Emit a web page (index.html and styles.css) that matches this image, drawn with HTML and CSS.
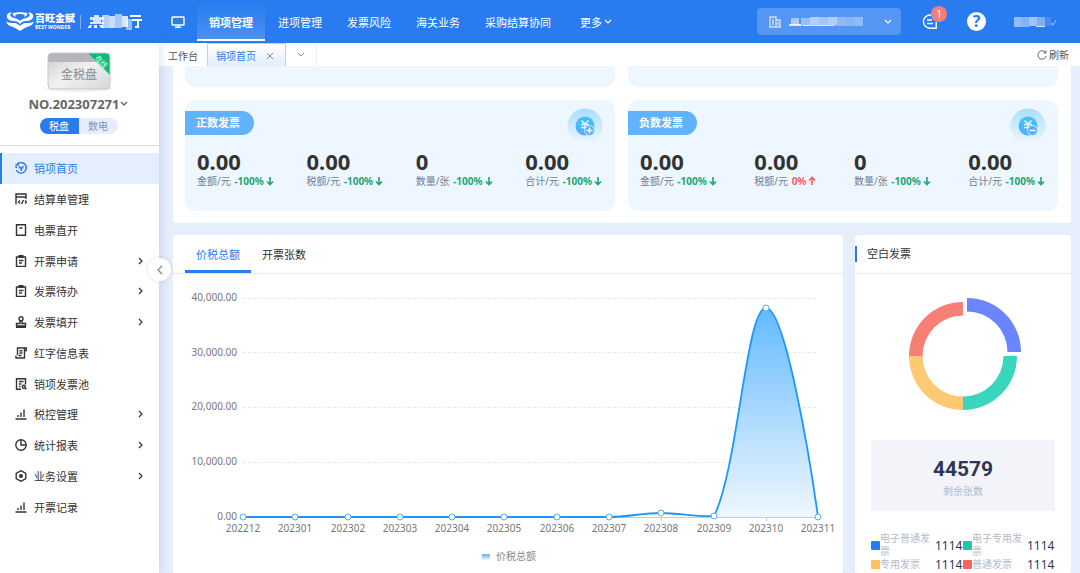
FILE: index.html
```html
<!DOCTYPE html>
<html lang="zh-CN">
<head>
  <meta charset="UTF-8">
  <meta name="viewport" content="width=device-width, initial-scale=1">
  <title>百旺金赋 - 销项管理</title>
  <link rel="stylesheet" href="styles.css">
</head>
<body>
  <!-- Header -->
  <header class="header">
    <a class="brand" href="#">
      <svg class="brand-logo" width="28" height="20" viewBox="0 0 28 20" fill="#fff">
        <path d="M1 3 C2 1 4 0 6 1 C3 2 4 5 8 6 C11 6.500 13 7.500 14 9 C15 7.500 17 6.500 20 6 C24 5 25 2 22 1 C24 0 26 1 27 3 C28 7 24 9 20 9 C17 9 15 10.500 14 12 C13 10.500 11 9 8 9 C4 9 0 7 1 3 Z"/>
        <path d="M7 1 C11 0 17 0 21 1 C22 2 21 4 18 5 C20 3 18 2 14 2 C10 2 8 3 10 5 C7 4 6 2 7 1 Z"/>
        <path d="M0 9 C2 11 5 11 8 11 C11 11 13 13 14 14 C15 13 17 11 20 11 C23 11 26 11 28 9 C27 13 24 14 21 15 C18 16 16 18 14 19 C12 18 10 16 7 15 C4 14 1 13 0 9 Z"/>
      </svg>
      <span class="brand-text">
        <span class="brand-name">百旺金赋</span>
        <span class="brand-en">BEST WONDER</span>
      </span>
      <span class="brand-line"></span>
      <svg class="brand-mask" width="54" height="18" viewBox="0 0 54 18" fill="#fff">
        <path d="M2 4h4v-2h5v2h5v3h-3v2h3v2h-14v-2h3v-2h-3z" opacity=".8"/>
        <path d="M0 14l2-2h2l-1 3h-3zM6 12h3v3h-3zM11 12l4 0 1 3h-3z"/>
        <rect x="14" y="2" width="7" height="13" opacity=".65"/>
        <rect x="21" y="3" width="6" height="12" opacity=".75"/>
        <rect x="27" y="1" width="7" height="14" opacity=".6"/>
        <rect x="34" y="3" width="6" height="11" opacity=".8"/>
        <rect x="38" y="6" width="6" height="11" opacity=".5"/>
        <rect x="42" y="2" width="11" height="2"/>
        <rect x="44" y="6" width="10" height="2"/>
        <path d="M49 8h2v7h-4v-2h2z"/>
      </svg>
    </a>

    <nav class="nav">
      <a class="nav-screen" href="#" aria-label="工作台">
        <svg width="14" height="12" viewBox="0 0 14 12" fill="none" stroke="#fff" stroke-width="1.400">
          <rect x="1" y="1" width="12" height="8" rx=".6"/>
          <path d="M7 9v2M4 11.300h6"/>
        </svg>
      </a>
      <a class="nav-item active" href="#">销项管理</a>
      <a class="nav-item" href="#">进项管理</a>
      <a class="nav-item" href="#">发票风险</a>
      <a class="nav-item" href="#">海关业务</a>
      <a class="nav-item" href="#">采购结算协同</a>
      <a class="nav-item more" href="#">更多
        <svg width="8" height="6" viewBox="0 0 8 6" fill="none" stroke="#fff" stroke-width="1.200"><path d="M1 1l3 3 3-3"/></svg>
      </a>
    </nav>

    <div class="header-right">
      <button class="company" type="button" aria-label="企业">
        <svg width="12" height="12" viewBox="0 0 12 12" fill="none" stroke="#cfe0fd" stroke-width="1.400">
          <path d="M1 11V1h6v10M7 4h4v7M0 11h12M3 4h2M3 6h2M3 8h2M9 6v3"/>
        </svg>
        <svg width="74" height="12" viewBox="0 0 74 12" fill="#fff">
          <rect x="2" y="2" width="8" height="7" opacity=".5"/>
          <rect x="0" y="8" width="12" height="2" opacity=".8"/>
          <rect x="12" y="2" width="9" height="8" opacity=".4"/>
          <rect x="21" y="1" width="9" height="8" opacity=".55"/>
          <rect x="14" y="9" width="32" height="1" opacity=".7"/>
          <rect x="30" y="1" width="9" height="9" opacity=".45"/>
          <rect x="39" y="1" width="9" height="8" opacity=".55"/>
          <rect x="48" y="1" width="9" height="9" opacity=".35"/>
          <rect x="57" y="1" width="9" height="9" opacity=".3"/>
          <rect x="66" y="1" width="8" height="9" opacity=".36"/>
        </svg>
        <svg class="company-arrow" width="8" height="6" viewBox="0 0 8 6" fill="none" stroke="#fff" stroke-width="1.200"><path d="M1 1l3 3 3-3"/></svg>
      </button>
      <button class="message" type="button" aria-label="消息">
        <svg width="16" height="16" viewBox="0 0 16 16" fill="none" stroke="#fff" stroke-width="1.400">
          <path d="M9 1H8a6.500 6.500 0 1 0 0 13.200h6.200V8"/>
          <path d="M5 6h5M5 9.500h6"/>
        </svg>
        <span class="badge">1</span>
      </button>
      <a class="help" href="#" aria-label="帮助">?</a>
      <button class="user" type="button" aria-label="用户">
        <svg width="44" height="14" viewBox="0 0 44 14" fill="#fff">
          <rect x="0" y="2" width="7" height="10" opacity=".5"/>
          <rect x="7" y="2" width="8" height="10" opacity=".42"/>
          <rect x="15" y="2" width="8" height="9" opacity=".55"/>
          <rect x="23" y="2" width="8" height="10" opacity=".4"/>
          <rect x="22" y="11" width="9" height="1" opacity=".7"/>
          <rect x="31" y="2" width="6" height="9" opacity=".12"/>
          <path d="M37 8l2 2 3-5" fill="none" stroke="#fff" stroke-width="1.200" opacity=".45"/>
        </svg>
      </button>
    </div>
  </header>

  <div class="layout">
    <!-- Sidebar -->
    <aside class="sidebar">
      <div class="device">
        <svg class="disk" width="70" height="44" viewBox="0 0 70 44">
          <defs>
            <linearGradient id="diskBody" x1="0" y1="0" x2="1" y2="1">
              <stop offset="0" stop-color="#ccccd0"/>
              <stop offset=".5" stop-color="#f2f1f2"/>
              <stop offset="1" stop-color="#d6d5d8"/>
            </linearGradient>
            <clipPath id="diskClip"><rect x="4" y="2" width="62" height="36" rx="4"/></clipPath>
          </defs>
          <ellipse cx="35" cy="38" rx="33" ry="3" fill="#f0f0f1"/>
          <g clip-path="url(#diskClip)">
            <rect x="4" y="2" width="62" height="36" fill="url(#diskBody)"/>
            <rect x="4" y="2" width="62" height="9" fill="#b5b5bb"/>
            <path d="M44 2h22v22z" fill="#0dbb77"/>
          </g>
          <rect x="4" y="2" width="62" height="36" rx="4" fill="none" stroke="#c9c9cc"/>
          <text class="disk-text" x="35" y="28" text-anchor="middle">金税盘</text>
          <text class="disk-flag" x="57" y="13" text-anchor="middle" transform="rotate(45 57 11)">在线</text>
        </svg>
        <button class="device-no" type="button">NO.202307271
          <svg width="8" height="6" viewBox="0 0 8 6" fill="none" stroke="#666" stroke-width="1.400"><path d="M1 1l3 3 3-3"/></svg>
        </button>
        <div class="switch">
          <button class="switch-item on" type="button">税盘</button>
          <button class="switch-item" type="button">数电</button>
        </div>
      </div>

      <nav class="menu">
        <a class="menu-item active" href="#">
          <svg class="icon" viewBox="0 0 12 12"><path d="M2 2.300A5.300 5.300 0 1 1 1.200 8M.3 3h3.500M.3 5.200h2"/><path d="M4.300 3.500L6.200 5.600 8.100 3.500 8.800 4.200 8 5.500h.8v1H7v2.400H5.500V6.500H3.800v-1h.8L3.600 4.200z" fill="currentColor" stroke="none"/></svg>
          销项首页
        </a>
        <a class="menu-item" href="#">
          <svg class="icon" viewBox="0 0 12 12"><path d="M1 11.500V1h10v5M1 4h10M5 7.500L3.500 9 5 10.500M10 7.500L11.500 9 10 10.500M8.500 7L6.500 11"/></svg>
          结算单管理
        </a>
        <a class="menu-item" href="#">
          <svg class="icon" viewBox="0 0 12 12"><path d="M1.500 .8h9v10.400h-9zM4.500 4h3"/></svg>
          电票直开
        </a>
        <a class="menu-item" href="#">
          <svg class="icon" viewBox="0 0 12 12"><path d="M1.500 2h9v9.400h-9zM4 5.500h4.500M4 8h3"/><path d="M3.500 0h5v3h-5z" fill="currentColor" stroke="none"/></svg>
          开票申请
          <svg class="arrow" viewBox="0 0 6 8"><path d="M1 1l3 3-3 3"/></svg>
        </a>
        <a class="menu-item" href="#">
          <svg class="icon" viewBox="0 0 12 12"><path d="M1.500 2h9v9.400h-9zM4 5.500h4.500M4 8h3"/><path d="M3.500 0h5v3h-5z" fill="currentColor" stroke="none"/></svg>
          发票待办
          <svg class="arrow" viewBox="0 0 6 8"><path d="M1 1l3 3-3 3"/></svg>
        </a>
        <a class="menu-item" href="#">
          <svg class="icon" viewBox="0 0 12 12"><circle cx="6" cy="2.800" r="2"/><path d="M5 4.500v3H1.500V10h9V7.500H7v-3M1 11.400h10"/></svg>
          发票填开
          <svg class="arrow" viewBox="0 0 6 8"><path d="M1 1l3 3-3 3"/></svg>
        </a>
        <a class="menu-item" href="#">
          <svg class="icon" viewBox="0 0 12 12"><path d="M2.500 8V1h9v2.500h-2V11h-8.500V8.500M9.500 3.500V1M4.500 3.800h3M4.500 6h3M3.500 8.500h3"/></svg>
          红字信息表
        </a>
        <a class="menu-item" href="#">
          <svg class="icon" viewBox="0 0 12 12"><path d="M6 11.200H1.500V.8h9v5.700M4 3.500h4.500M4 6h2.500M4 8.500h1.500"/><circle cx="8.800" cy="8.800" r="1.500"/><path d="M10 10l1.300 1.300"/></svg>
          销项发票池
        </a>
        <a class="menu-item" href="#">
          <svg class="icon" viewBox="0 0 12 12"><path d="M.5 11h11M3 9V7M6 9V4.500M9 9V1.500"/></svg>
          税控管理
          <svg class="arrow" viewBox="0 0 6 8"><path d="M1 1l3 3-3 3"/></svg>
        </a>
        <a class="menu-item" href="#">
          <svg class="icon" viewBox="0 0 12 12"><circle cx="6" cy="6" r="5.200"/><path d="M6 .8V6h5.200"/></svg>
          统计报表
          <svg class="arrow" viewBox="0 0 6 8"><path d="M1 1l3 3-3 3"/></svg>
        </a>
        <a class="menu-item" href="#">
          <svg class="icon" viewBox="0 0 12 12"><path d="M6 .7l4.800 2.600v5.400L6 11.300 1.200 8.700V3.300z"/><circle cx="6" cy="6" r="1.300" fill="currentColor"/></svg>
          业务设置
          <svg class="arrow" viewBox="0 0 6 8"><path d="M1 1l3 3-3 3"/></svg>
        </a>
        <a class="menu-item" href="#">
          <svg class="icon" viewBox="0 0 12 12"><path d="M.5 11h11M3 9V7M6 9V4.500M9 9V1.500"/></svg>
          开票记录
        </a>
      </nav>
      <button class="collapse" type="button" aria-label="收起菜单">
        <svg width="6" height="10" viewBox="0 0 6 10" fill="none" stroke="#888" stroke-width="1.300"><path d="M5 1L1 5l4 4"/></svg>
      </button>
    </aside>

    <main class="main">
      <!-- Page tabs -->
      <div class="tabs">
        <a class="tab" href="#">工作台</a>
        <a class="tab current" href="#">销项首页
          <svg width="8" height="8" viewBox="0 0 8 8" fill="none" stroke="#888"><path d="M1 1l6 6M7 1L1 7"/></svg>
        </a>
        <button class="tab-more" type="button" aria-label="更多标签">
          <svg width="8" height="6" viewBox="0 0 8 6" fill="none" stroke="#888"><path d="M1 1l3 3 3-3"/></svg>
        </button>
        <button class="refresh" type="button">
          <svg width="10" height="10" viewBox="0 0 10 10" fill="none" stroke="#666"><path d="M8.500 2.500A4.200 4.200 0 1 0 9.200 6M9 .5v2.500H6.500"/></svg>
          刷新
        </button>
      </div>

      <div class="content">
        <!-- Invoice totals -->
        <section class="panel totals">
          <div class="card card-cut"></div>
          <div class="card card-cut"></div>

          <div class="card">
            <h2 class="tag">正数发票</h2>
            <svg class="coin" viewBox="0 0 36 36">
              <defs>
                <linearGradient id="halo" x1="0" y1="0" x2="0" y2="1">
                  <stop offset="0" stop-color="#a9deff"/>
                  <stop offset="1" stop-color="#eef7ff"/>
                </linearGradient>
                <linearGradient id="coin" x1="0" y1="0" x2="0" y2="1">
                  <stop offset="0" stop-color="#3cc3fb"/>
                  <stop offset="1" stop-color="#5aacff"/>
                </linearGradient>
              </defs>
              <circle cx="18" cy="18" r="17.500" fill="url(#halo)"/>
              <circle cx="18" cy="18" r="9.500" fill="url(#coin)"/>
              <path d="M14.500 12.500l3.500 3.500 3.500-3.500M14 16.500h8M14 19.500h5M18 16v6" fill="none" stroke="#e4f6ff" stroke-width="1.500"/>
              <circle cx="22.500" cy="22.500" r="5" fill="#55aeff" stroke="#d8efff"/>
              <path d="M19.500 22.500h6M22.500 19.500v6" stroke="#fff" stroke-width="1.500"/>
            </svg>
            <div class="figures">
              <div class="figure"><strong>0.00</strong><p>金额/元 <b class="down">-100%<svg class="trend" viewBox="0 0 8 10"><path d="M4 1v7M1 5.500l3 3 3-3"/></svg></b></p></div>
              <div class="figure"><strong>0.00</strong><p>税额/元 <b class="down">-100%<svg class="trend" viewBox="0 0 8 10"><path d="M4 1v7M1 5.500l3 3 3-3"/></svg></b></p></div>
              <div class="figure"><strong>0</strong><p>数量/张 <b class="down">-100%<svg class="trend" viewBox="0 0 8 10"><path d="M4 1v7M1 5.500l3 3 3-3"/></svg></b></p></div>
              <div class="figure"><strong>0.00</strong><p>合计/元 <b class="down">-100%<svg class="trend" viewBox="0 0 8 10"><path d="M4 1v7M1 5.500l3 3 3-3"/></svg></b></p></div>
            </div>
          </div>

          <div class="card">
            <h2 class="tag">负数发票</h2>
            <svg class="coin" viewBox="0 0 36 36">
              <circle cx="18" cy="18" r="17.500" fill="url(#halo)"/>
              <circle cx="18" cy="18" r="9.500" fill="url(#coin)"/>
              <path d="M14.500 12.500l3.500 3.500 3.500-3.500M14 16.500h8M14 19.500h5M18 16v6" fill="none" stroke="#e4f6ff" stroke-width="1.500"/>
              <circle cx="22.500" cy="22.500" r="5" fill="#55aeff" stroke="#d8efff"/>
              <path d="M19.500 22.500h6" stroke="#fff" stroke-width="1.500"/>
            </svg>
            <div class="figures">
              <div class="figure"><strong>0.00</strong><p>金额/元 <b class="down">-100%<svg class="trend" viewBox="0 0 8 10"><path d="M4 1v7M1 5.500l3 3 3-3"/></svg></b></p></div>
              <div class="figure"><strong>0.00</strong><p>税额/元 <b class="up">0%<svg class="trend" viewBox="0 0 8 10"><path d="M4 9V2M1 4.500l3-3 3 3"/></svg></b></p></div>
              <div class="figure"><strong>0</strong><p>数量/张 <b class="down">-100%<svg class="trend" viewBox="0 0 8 10"><path d="M4 1v7M1 5.500l3 3 3-3"/></svg></b></p></div>
              <div class="figure"><strong>0.00</strong><p>合计/元 <b class="down">-100%<svg class="trend" viewBox="0 0 8 10"><path d="M4 1v7M1 5.500l3 3 3-3"/></svg></b></p></div>
            </div>
          </div>
        </section>

        <div class="row">
          <!-- Monthly chart -->
          <section class="panel trend-panel">
            <div class="panel-head">
              <button class="chart-tab selected" type="button">价税总额</button>
              <button class="chart-tab" type="button">开票张数</button>
            </div>
            <svg class="chart" viewBox="0 0 670 300">
              <defs>
                <linearGradient id="area" x1="0" y1="0" x2="0" y2="1">
                  <stop offset="0" stop-color="#5cb6ff"/>
                  <stop offset="1" stop-color="#eef7ff"/>
                </linearGradient>
              </defs>
              <g class="grid">
                <path d="M70 24.500H645M70 78.500H645M70 133.500H645M70 188.500H645"/>
              </g>
              <path class="axis" d="M70 243.500H645M488.500 243v4M593.500 243v4"/>
              <path d="M541 242C565 195 573 34 593 34C612 34 637 185 645 243H541Z" fill="url(#area)" opacity=".95"/>
              <path class="line" d="M70 243H436C454 243 470 239 488 239C506 239 524 243 541 242C565 195 573 34 593 34C612 34 637 185 645 243"/>
              <g class="dots">
                <circle cx="70" cy="243" r="3"/>
                <circle cx="122" cy="243" r="3"/>
                <circle cx="175" cy="243" r="3"/>
                <circle cx="227" cy="243" r="3"/>
                <circle cx="279" cy="243" r="3"/>
                <circle cx="331" cy="243" r="3"/>
                <circle cx="384" cy="243" r="3"/>
                <circle cx="436" cy="243" r="3"/>
                <circle cx="488" cy="239" r="3"/>
                <circle cx="541" cy="242" r="3"/>
                <circle cx="593" cy="34" r="3"/>
                <circle cx="645" cy="243" r="3"/>
              </g>
              <g class="labels" text-anchor="end">
                <text x="64" y="27">40,000.00</text>
                <text x="64" y="82">30,000.00</text>
                <text x="64" y="136">20,000.00</text>
                <text x="64" y="191">10,000.00</text>
                <text x="64" y="246">0.00</text>
              </g>
              <g class="labels" text-anchor="middle">
                <text x="70" y="258">202212</text>
                <text x="122" y="258">202301</text>
                <text x="175" y="258">202302</text>
                <text x="227" y="258">202303</text>
                <text x="279" y="258">202304</text>
                <text x="331" y="258">202305</text>
                <text x="384" y="258">202306</text>
                <text x="436" y="258">202307</text>
                <text x="488" y="258">202308</text>
                <text x="541" y="258">202309</text>
                <text x="593" y="258">202310</text>
                <text x="645" y="258">202311</text>
              </g>
              <rect x="309" y="280" width="8" height="6" fill="url(#area)"/>
              <text class="legend-text" x="323" y="286">价税总额</text>
            </svg>
          </section>

          <!-- Blank invoices -->
          <section class="panel blank-panel">
            <div class="panel-head">
              <h2 class="panel-title">空白发票</h2>
            </div>
            <svg class="donut" width="120" height="120" viewBox="0 0 120 120">
              <path d="M64 2a54 54 0 0 1 54 54h-13.500A40.500 40.500 0 0 0 64 15.500z" fill="#6986ff"/>
              <path d="M114 60a54 54 0 0 1-54 54v-13.500A40.500 40.500 0 0 0 100.500 60z" fill="#3ad5bd"/>
              <path d="M60 114A54 54 0 0 1 6 60h13.500A40.500 40.500 0 0 0 60 100.500z" fill="#fec973"/>
              <path d="M6 60A54 54 0 0 1 60 6v13.500A40.500 40.500 0 0 0 19.500 60z" fill="#f67f76"/>
            </svg>
            <div class="remain">
              <strong>44579</strong>
              <span>剩余张数</span>
            </div>
            <ul class="legend">
              <li><i class="dot blue"></i><span>电子普通发票</span><b>1114</b></li>
              <li><i class="dot green"></i><span>电子专用发票</span><b>1114</b></li>
              <li><i class="dot yellow"></i><span>专用发票</span><b>1114</b></li>
              <li><i class="dot red"></i><span>普通发票</span><b>1114</b></li>
            </ul>
          </section>
        </div>
      </div>
    </main>
  </div>
</body>
</html>
```
FILE: styles.css
```css
* {
  box-sizing: border-box;
}
body {
  margin: 0;
  height: 100vh;
  display: flex;
  flex-direction: column;
  overflow: hidden;
  font-family: "Noto Sans", "Noto Sans CJK SC", sans-serif;
  font-size: 11px;
  color: #333;
  background: #e6eefc;
}
a {
  color: inherit;
  text-decoration: none;
}
button {
  font: inherit;
  color: inherit;
  background: none;
  border: none;
  padding: 0;
  cursor: pointer;
}
h2, p, ul {
  margin: 0;
  padding: 0;
}
svg {
  display: block;
  flex: none;
}

/* Header */
.header {
  display: flex;
  align-items: center;
  flex: none;
  height: 43px;
  background: #297cf0;
  color: #fff;
}
.brand {
  display: flex;
  align-items: center;
  width: 159px;
  padding-left: 6px;
}
.brand-text {
  display: flex;
  flex-direction: column;
  margin-left: 1px;
}
.brand-name {
  font-size: 10px;
  font-weight: 900;
  line-height: 11px;
}
.brand-en {
  font-size: 5px;
  font-weight: 700;
  line-height: 6px;
  white-space: nowrap;
}
.brand-line {
  width: 1px;
  height: 14px;
  margin: 0 7px 0 5px;
  background: rgba(255,255,255,0.4);
}
.nav {
  display: flex;
  align-items: center;
  gap: 1px;
  height: 100%;
}
.nav-screen {
  padding: 0 11px 0 12px;
}
.nav-item {
  display: flex;
  align-items: center;
  gap: 2px;
  height: 38px;
  padding: 2px 12px 0;
  white-space: nowrap;
  border-bottom: 2px solid transparent;
}
.nav-item.active {
  font-weight: 700;
  border-bottom-color: #fff;
  background: linear-gradient(rgba(255,255,255,0), rgba(255,255,255,0.16));
}
.nav-item.more {
  margin-left: 4px;
}
.header-right {
  display: flex;
  align-items: center;
  margin-left: auto;
  padding-right: 22px;
}
.company {
  display: flex;
  align-items: center;
  gap: 8px;
  width: 144px;
  height: 27px;
  padding: 0 9px 0 12px;
  border-radius: 4px;
  background: rgba(255,255,255,0.2);
}
.company-arrow {
  margin-left: auto;
}
.message {
  position: relative;
  margin-left: 21px;
}
.badge {
  position: absolute;
  top: -8px;
  left: 9px;
  width: 16px;
  height: 16px;
  border-radius: 8px;
  background: #f57f78;
  font-size: 10px;
  line-height: 16px;
}
.help {
  width: 19px;
  height: 19px;
  margin: 0 28px 0 29px;
  border-radius: 50%;
  background: #fff;
  color: #297cf0;
  font-size: 16px;
  font-weight: 700;
  line-height: 19px;
  text-align: center;
}

/* Sidebar */
.layout {
  display: flex;
  flex: 1;
  min-height: 0;
}
.sidebar {
  position: relative;
  z-index: 1;
  display: flex;
  flex-direction: column;
  flex: none;
  width: 159px;
  background: #fff;
  box-shadow: 2px 0 8px rgba(60,80,130,0.16);
}
.device {
  display: flex;
  flex-direction: column;
  align-items: center;
  height: 103px;
  padding: 8px 2px 0 0;
  border-bottom: 1px solid #ddd;
}
.disk-text {
  font-size: 12px;
  font-weight: 500;
  fill: #999;
}
.disk-flag {
  font-size: 7px;
  fill: #fff;
}
.device-no {
  display: flex;
  align-items: center;
  gap: 1px;
  font-size: 13px;
  font-weight: 700;
  line-height: 18px;
  color: #666;
}
.switch {
  display: flex;
  margin-top: 5px;
  border-radius: 8px;
  overflow: hidden;
  background: #e6eefc;
}
.switch-item {
  width: 39px;
  font-size: 10px;
  line-height: 16px;
  color: #8093b3;
}
.switch-item.on {
  background: #297cf0;
  color: #fff;
}
.menu {
  flex: 1;
  display: grid;
  grid-auto-rows: 1fr;
  padding: 7px 0 51px;
}
.menu-item {
  display: flex;
  align-items: center;
  padding: 0 15px 0 11px;
  border-left: 2px solid transparent;
  white-space: nowrap;
}
.menu-item.active {
  color: #297cf0;
  background: #e3eefe;
  border-left-color: #297cf0;
}
.icon {
  width: 12px;
  height: 12px;
  margin: 0 7px 0 2px;
  fill: none;
  stroke: currentColor;
  stroke-width: 1.4;
}
.arrow {
  width: 6px;
  height: 8px;
  margin-left: auto;
  fill: none;
  stroke: currentColor;
  stroke-width: 1.2;
}
.collapse {
  position: absolute;
  top: 215px;
  right: -12px;
  display: flex;
  align-items: center;
  justify-content: center;
  width: 23px;
  height: 23px;
  border-radius: 50%;
  background: #fff;
  box-shadow: 0 0 4px rgba(0,0,0,0.12);
}

/* Page tabs */
.main {
  display: flex;
  flex-direction: column;
  flex: 1;
  min-width: 0;
}
.tabs {
  display: flex;
  flex: none;
  height: 23px;
  padding-right: 11px;
  background: #fff;
  font-size: 10px;
  color: #555;
}
.tab {
  display: flex;
  align-items: center;
  padding: 2px 9px 0;
}
.tab.current {
  gap: 10px;
  padding: 1px 11px 0 8px;
  color: #297cf0;
  border: 1px solid #bdd1f5;
  border-bottom: none;
  background: linear-gradient(#fff, #e3edfe);
}
.tab-more {
  width: 31px;
  padding-left: 11px;
  border-right: 1px solid #eee;
}
.refresh {
  display: flex;
  align-items: center;
  gap: 2px;
  margin-left: auto;
}

/* Content */
.content {
  display: flex;
  flex-direction: column;
  flex: 1;
  gap: 12px;
  min-height: 0;
  padding: 0 9px 0 14px;
  overflow: hidden;
}
.panel {
  background: #fff;
  border-radius: 3px;
}
.totals {
  display: grid;
  grid-template-columns: 1fr 1fr;
  gap: 13px;
  flex: none;
  padding: 0 13px 12px 12px;
  border-radius: 0 0 3px 3px;
}
.card {
  position: relative;
  height: 111px;
  padding-top: 11px;
  border-radius: 10px;
  background: #eef7ff;
}
.card-cut {
  height: 21px;
  border-radius: 0 0 10px 10px;
}
.tag {
  width: 69px;
  padding-left: 11px;
  border-radius: 0 12px 12px 0;
  background: #61b3ff;
  color: #fff;
  font-size: 11px;
  font-weight: 700;
  line-height: 24px;
}
.coin {
  position: absolute;
  top: 8px;
  right: 12px;
  width: 36px;
  height: 36px;
}
.figures {
  display: flex;
  justify-content: space-between;
  margin-top: 14px;
  padding: 0 13px 0 12px;
}
.figure strong {
  display: block;
  font-size: 22px;
  line-height: 24px;
}
.figure p {
  font-size: 10px;
  line-height: 16px;
  color: #6f7e95;
  white-space: nowrap;
}
.figure b {
  margin-left: 1px;
}
.down {
  color: #1ba672;
}
.up {
  color: #ff5a5a;
}
.trend {
  display: inline-block;
  width: 8px;
  height: 10px;
  margin-left: 2px;
  vertical-align: -1px;
  fill: none;
  stroke: currentColor;
  stroke-width: 1.6;
}
.row {
  display: flex;
  align-items: stretch;
  gap: 12px;
  flex: 1;
  min-height: 0;
}
.panel-head {
  display: flex;
  align-items: center;
  height: 39px;
  border-bottom: 1px solid #e8e8e8;
}
.trend-panel {
  flex: 1;
  min-width: 0;
}
.trend-panel .panel-head {
  padding-left: 12px;
}
.chart-tab {
  height: 37px;
  padding: 3px 11px 0;
  border-bottom: 3px solid transparent;
}
.chart-tab.selected {
  color: #297cf0;
  border-bottom-color: #297cf0;
}
.chart {
  width: 100%;
  height: auto;
}
.grid {
  fill: none;
  stroke: #e6e8eb;
  stroke-dasharray: 3 2;
}
.axis {
  fill: none;
  stroke: #c8ccd2;
}
.line {
  fill: none;
  stroke: #1b98ff;
  stroke-width: 1.8;
}
.dots {
  fill: #fff;
  stroke: #55aefb;
}
.labels {
  font-size: 10px;
  fill: #777;
}
.legend-text {
  font-size: 10px;
  fill: #888;
}

/* Blank invoices */
.blank-panel {
  width: 216px;
}
.panel-title {
  padding-left: 10px;
  border-left: 2px solid #297cf0;
  font-size: 11px;
  font-weight: 400;
  line-height: 16px;
}
.donut {
  margin: 22px auto 0;
}
.remain {
  display: flex;
  flex-direction: column;
  align-items: center;
  margin: 24px 16px 0;
  padding: 16px 0 11px;
  background: #f2f4fa;
}
.remain strong {
  font-family: Roboto, sans-serif;
  font-size: 21px;
  line-height: 26px;
  color: #2f3655;
}
.remain span {
  font-size: 10px;
  line-height: 18px;
  color: #b4bac9;
}
.legend {
  display: grid;
  grid-template-columns: 1fr 1fr;
  margin: 21px 16px 0;
  list-style: none;
}
.legend li {
  display: flex;
  align-items: center;
  font-size: 10px;
  line-height: 13px;
  color: #b4bac9;
}
.legend span {
  width: 50px;
}
.legend b {
  margin-left: 5px;
  font-size: 12px;
  font-weight: 400;
  color: #2f3655;
}
.dot {
  flex: none;
  width: 9px;
  height: 9px;
  border-radius: 1px;
}
.blue {
  background: #297cf0;
}
.green {
  background: #19c9a9;
}
.yellow {
  background: #fdc25d;
}
.red {
  background: #f5665c;
}
```
